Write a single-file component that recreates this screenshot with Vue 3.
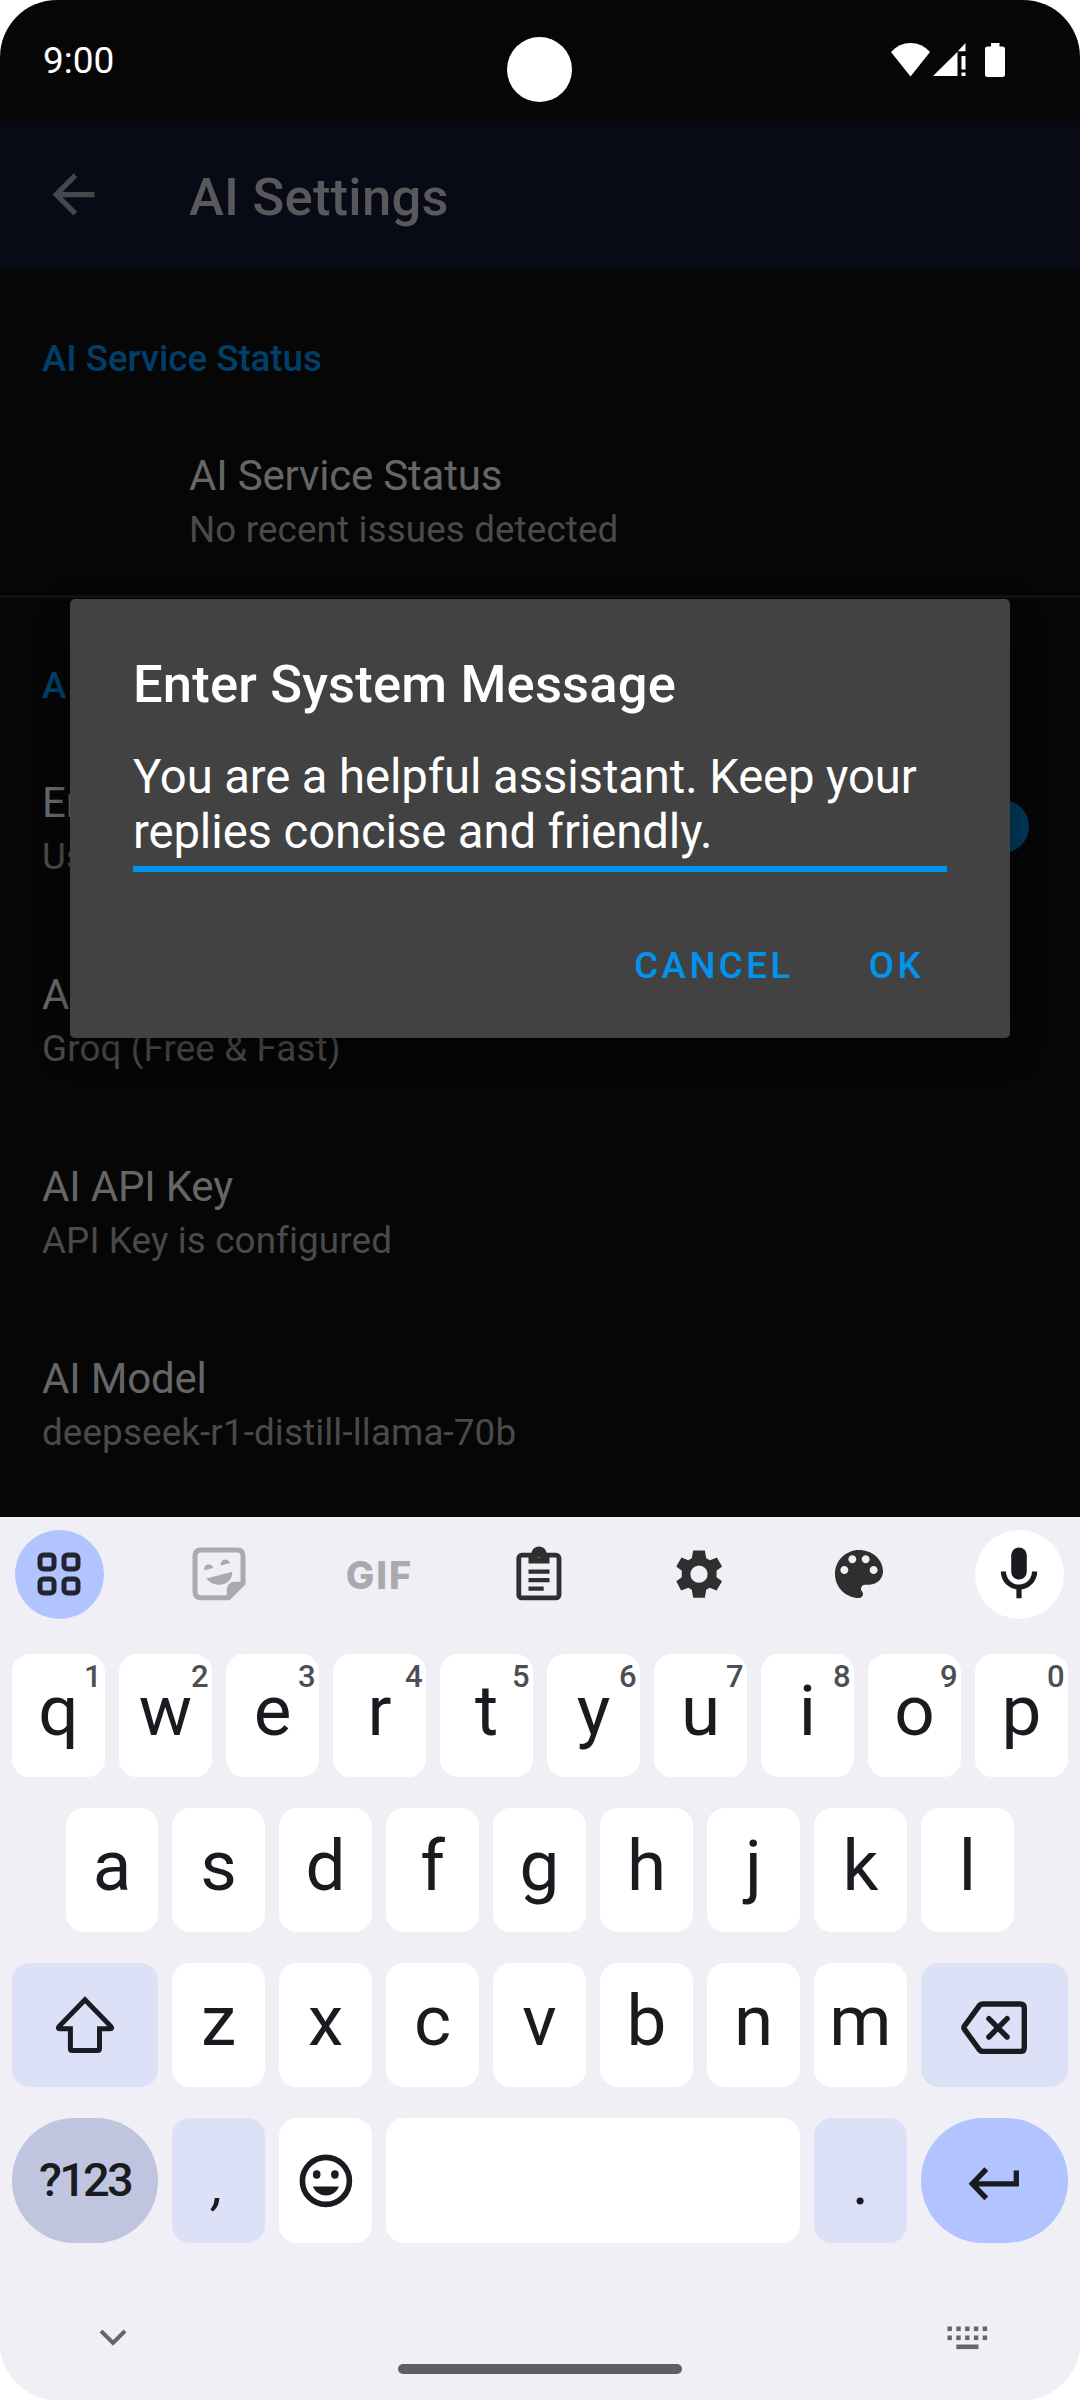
<script setup>
const settings = [
  { title: 'En', summary: 'Us', toggle: true },
  { title: 'A', summary: 'Groq (Free & Fast)' },
  { title: 'AI API Key', summary: 'API Key is configured' },
  { title: 'AI Model', summary: 'deepseek-r1-distill-llama-70b' },
]

const topRow = [...'qwertyuiop'].map((label, i) => ({ label, hint: String((i + 1) % 10) }))
const homeRow = [...'asdfghjkl']
const bottomRow = [...'zxcvbnm']

const keyDots = [0, 1].flatMap((row) => [0, 1, 2, 3, 4].map((col) => ({ x: col * 8.8, y: row * 9 })))
</script>

<template>
  <div class="phone">
    <header class="status-bar">
      <span class="clock">9:00</span>
      <div class="status-icons">
        <svg class="wifi" viewBox="0 0 39 34"><path d="M0 9Q8 0 19.500 0T39 9L19.500 33.500Z" /></svg>
        <svg class="signal" viewBox="0 0 33 34">
          <path d="M0 33 24.500 8.800V33ZM24.800 8.200 32.500 0V8.200ZM28.500 13H32.500V26.500H28.500ZM28.500 29.500H32.500V33H28.500Z" />
        </svg>
        <svg class="battery" viewBox="0 0 20 34">
          <path d="M6 0H14.500V3.500H17.500Q20 3.500 20 6V31.500Q20 34 17.500 34H2.500Q0 34 0 31.500V6Q0 3.500 2.500 3.500H6Z" />
        </svg>
      </div>
      <div class="camera"></div>
    </header>

    <div class="app-bar">
      <svg class="back" viewBox="0 0 24 24"><path d="M20 11H7.830l5.590-5.590L12 4l-8 8 8 8 1.410-1.410L7.830 13H20v-2z" /></svg>
      <h1>AI Settings</h1>
    </div>

    <main class="settings">
      <h2 class="section first">AI Service Status</h2>
      <div class="item inset">
        <div class="item-title">AI Service Status</div>
        <div class="item-summary">No recent issues detected</div>
      </div>
      <h2 class="section second">A</h2>
      <div v-for="s in settings" :key="s.title" class="item">
        <div class="item-title">{{ s.title }}</div>
        <div class="item-summary">{{ s.summary }}</div>
        <div v-if="s.toggle" class="thumb"></div>
      </div>
    </main>

    <section class="keyboard">
      <div class="tools">
        <div class="tool menu">
          <svg viewBox="0 0 64 64" fill="none" stroke="#22242f" stroke-width="5">
            <rect x="13" y="13" width="14" height="14" rx="3.500" />
            <rect x="37" y="13" width="14" height="14" rx="3.500" />
            <rect x="13" y="37" width="14" height="14" rx="3.500" />
            <rect x="37" y="37" width="14" height="14" rx="3.500" />
          </svg>
        </div>
        <div class="tool">
          <svg viewBox="0 0 64 64" fill="#aaa9ae">
            <path d="M41.500 55.700H14Q8 55.700 8 49.700V14Q8 8 14 8H50Q56 8 56 14V41.500Z" fill="none" stroke="#aaa9ae" stroke-width="5" />
            <path d="M39.800 57V49Q39.800 39.800 48 39.800H57.500L42 57Z" />
            <path d="M17.200 28.300A4.700 4.700 0 0 1 26.300 25.900Z" />
            <path d="M33.900 23.400A4.700 4.700 0 0 1 43 21Z" />
            <path d="M19.500 36.500 45.300 29.700C45.500 44 27 47 19.500 36.500Z" />
          </svg>
        </div>
        <div class="tool gif"><span>GIF</span></div>
        <div class="tool">
          <svg viewBox="0 0 64 64" fill="#2f2f2f">
            <rect x="11.800" y="13.200" width="40.200" height="42.700" rx="3" fill="none" stroke="#2f2f2f" stroke-width="4.800" />
            <path fill-rule="evenodd" d="M21.500 21.500V11H24.300A7.800 7.800 0 0 1 39.700 11H42.500V21.500ZM32 11.300A2.200 2.200 0 1 0 32 15.700 2.200 2.200 0 1 0 32 11.300Z" />
            <path d="M21.500 27.500h21v4.200h-21zM21.500 36h21v4.200h-21zM21.500 44.500h15.200v4.200H21.500z" />
          </svg>
        </div>
        <div class="tool">
          <svg viewBox="370 97.500 186 192" preserveAspectRatio="none" fill="#2f2f2f">
            <path fill-rule="evenodd" d="M446 123H480L484 146 495 152 515 144 530 171 514 184V203L530 215 514 243 494 235 484 241 480 265H446L442 241 432 235 411 243 397 215 413 203V184L397 171 412 144 432 152 442 146ZM463 168A25 26 0 1 0 463 220 25 26 0 1 0 463 168Z" />
          </svg>
        </div>
        <div class="tool">
          <svg viewBox="0 0 24 24" fill="#2f2f2f">
            <path d="M12 3c-4.970 0-9 4.030-9 9s4.030 9 9 9c.83 0 1.500-.67 1.500-1.500 0-.39-.15-.74-.39-1.010-.23-.26-.38-.61-.38-.99 0-.83.67-1.500 1.500-1.500H16c2.760 0 5-2.240 5-5 0-4.420-4.030-8-9-8zm-5.500 9c-.83 0-1.500-.67-1.500-1.500S5.670 9 6.500 9 8 9.670 8 10.500 7.330 12 6.500 12zm3-4C8.670 8 8 7.330 8 6.500S8.670 5 9.500 5s1.500.67 1.500 1.500S10.330 8 9.500 8zm5 0c-.83 0-1.500-.67-1.500-1.500S13.670 5 14.500 5s1.500.67 1.500 1.500S15.330 8 14.500 8zm3 4c-.83 0-1.500-.67-1.500-1.500S16.670 9 17.500 9s1.500.67 1.500 1.500-.67 1.500-1.500 1.500z" />
          </svg>
        </div>
        <div class="tool mic">
          <svg viewBox="0 0 64 64" fill="#1a1b20">
            <rect x="24.200" y="5.500" width="15.600" height="32" rx="7.800" />
            <path d="M16.400 29.500A15.600 15.600 0 0 0 47.600 29.500M32 45V56.300" fill="none" stroke="#1a1b20" stroke-width="5.200" />
          </svg>
        </div>
      </div>

      <div class="row first-row">
        <div v-for="k in topRow" :key="k.label" class="key">{{ k.label }}<span class="hint">{{ k.hint }}</span></div>
      </div>
      <div class="row home-row">
        <div v-for="k in homeRow" :key="k" class="key">{{ k }}</div>
      </div>
      <div class="row">
        <div class="key wide tinted icon">
          <svg viewBox="0 0 64 64" fill="none" stroke="#1a1b20" stroke-width="5">
            <path d="M32 6.800 6.200 33.300Q4.200 35.800 7 35.800H17.400V55.500q0 2 2 2H44.500q2 0 2-2V35.800H57q2.800 0 .8-2.500Z" />
          </svg>
        </div>
        <div v-for="k in bottomRow" :key="k" class="key">{{ k }}</div>
        <div class="key wide tinted icon">
          <svg class="backspace" viewBox="0 0 72 64" fill="none" stroke="#1a1b20" stroke-width="5.400">
            <path d="M24 11H61.300Q65.300 11 65.300 15V54.400Q65.300 58.400 61.300 58.400H24Q21.300 58.400 19.800 56L5.800 36.800Q4 34.700 5.800 32.600L19.800 13.400Q21.300 11 24 11Z" />
            <path d="M29.900 25.700 48.100 44M48.100 25.700 29.900 44" stroke-linecap="round" />
          </svg>
        </div>
      </div>
      <div class="row last-row">
        <div class="key wide symbols"><span>?123</span></div>
        <div class="key tinted punct comma">,</div>
        <div class="key icon">
          <svg viewBox="0 0 64 64" fill="#1a1b20">
            <circle cx="31.900" cy="31.900" r="23.500" fill="none" stroke="#1a1b20" stroke-width="5.600" />
            <ellipse cx="22.700" cy="25.500" rx="3.800" ry="4.200" />
            <ellipse cx="40.900" cy="25.500" rx="3.800" ry="4.200" />
            <path d="M18.800 37.500H45C40 49.500 24 49.500 18.800 37.500Z" />
          </svg>
        </div>
        <div class="key space"></div>
        <div class="key tinted punct">.</div>
        <div class="key wide enter icon">
          <svg viewBox="0 0 64 64" fill="none" stroke="#1a1b20" stroke-width="5.300">
            <path d="M23.300 20.200 9.300 34.800 23.300 49.400M10 34.800H53.300V21.500" />
          </svg>
        </div>
      </div>

      <footer class="nav">
        <svg class="chevron" viewBox="0 0 28 18"><path d="M2 2 14 14 26 2" fill="none" stroke="#666" stroke-width="4" /></svg>
        <div class="pill"></div>
        <svg class="switcher" viewBox="0 0 41 24" fill="#666">
          <rect v-for="d in keyDots" :key="d.x + '-' + d.y" :x="d.x + 0.5" :y="d.y + 0.500" width="4.400" height="4.600" />
          <rect x="9.300" y="18.500" width="22.200" height="4.600" />
        </svg>
      </footer>
    </section>

    <div class="dialog">
      <h3>Enter System Message</h3>
      <div class="field">You are a helpful assistant. Keep your replies concise and friendly.</div>
      <div class="actions"><span>CANCEL</span><span>OK</span></div>
    </div>
  </div>
</template>

<style>
body { margin: 0; background: #fff; }
</style>

<style scoped>
.phone {
  position: relative;
  display: flex;
  flex-direction: column;
  width: 1080px;
  height: 2400px;
  overflow: hidden;
  border-radius: 57px;
  background: linear-gradient(#060606 1517px, #f0eff6 1517px);
  font-family: Roboto, "Liberation Sans", sans-serif;
}
h1, h2, h3 { margin: 0; font-weight: 500; }
svg { display: block; flex: none; }

.status-bar {
  position: relative;
  box-sizing: border-box;
  display: flex;
  justify-content: space-between;
  height: 121px;
  padding: 0 75px 0 43px;
  color: #fff;
}
.clock { font-size: 37px; line-height: 122px; }
.status-icons { display: flex; padding-top: 43px; fill: #fff; }
.wifi { width: 39px; height: 34px; }
.signal { width: 33px; height: 34px; margin-left: 3px; }
.battery { width: 20px; height: 34px; margin-left: 19px; }
.camera {
  position: absolute;
  left: 507px;
  top: 37px;
  width: 65px;
  height: 65px;
  border-radius: 50%;
  background: #fff;
}

.app-bar {
  display: flex;
  align-items: center;
  height: 147px;
  flex: none;
  padding-left: 42px;
  background: #080a16;
}
.back { width: 63px; height: 63px; fill: #47484c; }
.app-bar h1 {
  margin-left: 84px;
  padding-top: 5px;
  font-size: 52.500px;
  line-height: 60px;
  letter-spacing: 0.250px;
  color: #59595b;
}

.settings { height: 1249px; flex: none; overflow: hidden; }
.section {
  box-sizing: border-box;
  padding-left: 42px;
  font-size: 36.750px;
  line-height: 50px;
  letter-spacing: -0.050px;
  color: #003f69;
}
.first { height: 137px; padding-top: 66px; }
.second { height: 137px; padding-top: 63px; border-top: 3px solid #121212; }
.item {
  position: relative;
  box-sizing: border-box;
  height: 192px;
  padding: 43px 42px 0;
}
.inset { height: 190px; padding-left: 189px; }
.item-title { font-size: 42px; line-height: 56px; letter-spacing: -0.180px; color: #666; }
.item-summary { font-size: 36.750px; line-height: 52px; letter-spacing: 0.140px; color: #4a4a4a; }
.thumb {
  position: absolute;
  right: 51px;
  top: 68px;
  width: 53px;
  height: 53px;
  border-radius: 50%;
  background: #003556;
}

.dialog {
  position: absolute;
  left: 70px;
  top: 599px;
  box-sizing: border-box;
  width: 940px;
  height: 439px;
  padding: 50px 63px 0;
  border-radius: 5px;
  background: #424242;
  color: #fff;
  box-shadow: 0 12px 30px rgba(0, 0, 0, 0.35);
}
.dialog h3 { font-size: 52.500px; line-height: 70px; letter-spacing: 0.190px; }
.field {
  margin-top: 31px;
  height: 116px;
  border-bottom: 6px solid #0094ee;
  font-size: 47.250px;
  line-height: 55.400px;
  letter-spacing: -0.100px;
}
.actions {
  display: flex;
  justify-content: flex-end;
  gap: 75px;
  padding-right: 23px;
  margin-top: 69px;
  font-size: 36.750px;
  font-weight: 500;
  line-height: 50px;
  letter-spacing: 3.400px;
  color: #0094ee;
}

.keyboard { height: 883px; flex: none; background: #f0eff6; color: #1a1b20; }
.tools {
  display: flex;
  justify-content: space-between;
  padding: 13px 16px 0 15px;
}
.tool {
  display: flex;
  align-items: center;
  justify-content: center;
  width: 89px;
  height: 89px;
  border-radius: 50%;
}
.tool svg { width: 64px; height: 64px; margin: -1px 0 0 -1px; }
.menu { background: #b1c4ff; }
.mic { background: #fff; }
.gif { font-family: Inter, sans-serif; font-size: 38px; font-weight: 800; color: #aaa9ae; letter-spacing: 2px; }

.row { display: flex; gap: 14px; margin: 31px 12px 0; }
.first-row { margin-top: 35px; }
.home-row { margin-left: 66px; }
.home-row .key:first-child { width: 92px; }
.key {
  position: relative;
  width: 93px;
  height: 124px;
  flex: none;
  border-radius: 18px;
  background: #fff;
  text-align: center;
  font-size: 71px;
  line-height: 115px;
}
.first-row .key { height: 123px; line-height: 114px; }
.last-row .key { height: 125px; }
.hint {
  position: absolute;
  top: 5px;
  right: 4px;
  font-size: 31px;
  font-weight: 500;
  line-height: 36px;
  letter-spacing: -0.500px;
  color: #4c4e53;
}
.wide { width: 146px; }
.wide:last-child { width: 147px; }
.tinted { background: #dde1f8; }
.icon { display: flex; align-items: center; justify-content: center; }
.icon svg { width: 64px; height: 64px; }
.icon .backspace { width: 72px; }
.symbols {
  border-radius: 62px;
  background: #c0c5df;
}
.last-row .symbols {
  font-size: 47px;
  font-weight: 500;
  line-height: 124px;
  letter-spacing: -2.800px;
}
.punct { font-size: 64px; line-height: 129px; }
.comma { font-size: 54px; font-style: italic; line-height: 135px; }
.space { width: 414px; }
.enter { border-radius: 62px; background: #b1c4ff; }

.nav {
  display: flex;
  align-items: flex-start;
  justify-content: space-between;
  padding: 83px 92px 0 99px;
}
.chevron { width: 28px; height: 18px; margin-top: 3px; }
.pill { width: 284px; height: 10px; margin: 38px 0 0 6px; border-radius: 5px; background: #5f5f62; }
.switcher { width: 41px; height: 24px; }
</style>
